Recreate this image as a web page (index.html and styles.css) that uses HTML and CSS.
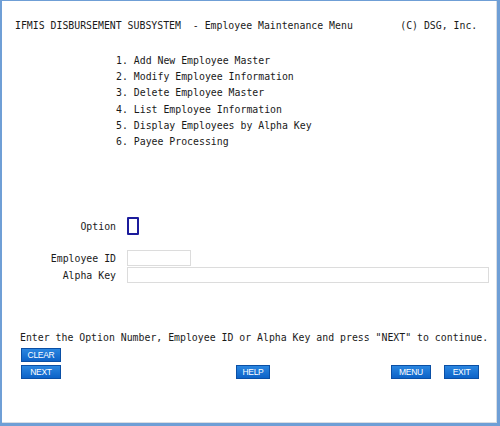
FILE: index.html
```html
<!DOCTYPE html>
<html>
<head>
<meta charset="utf-8">
<link rel="stylesheet" href="styles.css">
</head>
<body>
<div class="frame">
  <div class="title">IFMIS DISBURSEMENT SUBSYSTEM  - Employee Maintenance Menu        (C) DSG, Inc.</div>
  <ul class="menu">
    <li>1. Add New Employee Master</li>
    <li>2. Modify Employee Information</li>
    <li>3. Delete Employee Master</li>
    <li>4. List Employee Information</li>
    <li>5. Display Employees by Alpha Key</li>
    <li>6. Payee Processing</li>
  </ul>
  <div class="row option-row">
    <label class="lbl">Option</label>
    <div class="option-box"></div>
  </div>
  <div class="fields">
    <div class="row">
      <label class="lbl">Employee ID</label>
      <div class="input id-input"></div>
    </div>
    <div class="row">
      <label class="lbl">Alpha Key</label>
      <div class="input alpha-input"></div>
    </div>
  </div>
  <div class="instr">Enter the Option Number, Employee ID or Alpha Key and press "NEXT" to continue.</div>
  <div class="btn-clear"><span class="btn w40">CLEAR</span></div>
  <div class="btn-row">
    <span class="btn w40">NEXT</span>
    <span class="btn w34 help">HELP</span>
    <span class="btn w40 menu-btn">MENU</span>
    <span class="btn w35 exit">EXIT</span>
  </div>
</div>
</body>
</html>
```
FILE: styles.css
```css
html, body {
  margin: 0;
  padding: 0;
  background: #ffffff;
}
.frame {
  box-sizing: border-box;
  width: 500px;
  height: 426px;
  border-style: solid;
  border-color: #6f9fd6;
  border-width: 1px 3px 3px 2px;
  box-shadow: inset -1px -1px 0 #d9dde3;
  font-family: "DejaVu Sans Mono", "Liberation Mono", monospace;
  font-size: 9.85px;
  color: #1a1a1a;
  padding-top: 18px;
}
.title {
  white-space: pre;
  line-height: 14px;
  padding-left: 13px;
}
.menu {
  list-style: none;
  margin: 20px 0 0 0;
  padding: 0 0 0 114px;
  line-height: 16.2px;
}
.row {
  display: flex;
  align-items: center;
}
.lbl {
  width: 125px;
  text-align: right;
  padding-right: 11px;
  box-sizing: border-box;
  white-space: pre;
}
.option-row {
  margin-top: 67px;
  height: 18px;
}
.option-box {
  box-sizing: border-box;
  width: 12px;
  height: 18px;
  border: 2px solid #1c1c9c;
  border-radius: 1px;
}
.fields {
  margin-top: 15px;
  display: flex;
  flex-direction: column;
  gap: 1px;
}
.input {
  box-sizing: border-box;
  height: 16px;
  border: 1px solid #dcdcdc;
  background: #fff;
}
.id-input { width: 64px; }
.alpha-input { width: 362px; }
.instr {
  margin-top: 48px;
  padding-left: 18px;
  line-height: 14px;
  white-space: pre;
}
.btn-clear {
  margin-top: 3px;
  padding-left: 19px;
  height: 14px;
  display: flex;
}
.btn-row {
  margin-top: 3px;
  padding-left: 19px;
  display: flex;
  height: 14px;
}
.btn {
  box-sizing: border-box;
  height: 14px;
  display: flex;
  align-items: center;
  justify-content: center;
  background: linear-gradient(#2a86e0, #0d63c8);
  border: 1px solid #0a4fa5;
  color: #ffffff;
  font-family: "Liberation Sans", Arial, sans-serif;
  font-size: 8.5px;
  letter-spacing: -0.3px;
}
.w40 { width: 40px; }
.w34 { width: 34px; }
.w35 { width: 35px; }
.help { margin-left: 175px; }
.menu-btn { margin-left: 121px; }
.exit { margin-left: 13px; }
```
